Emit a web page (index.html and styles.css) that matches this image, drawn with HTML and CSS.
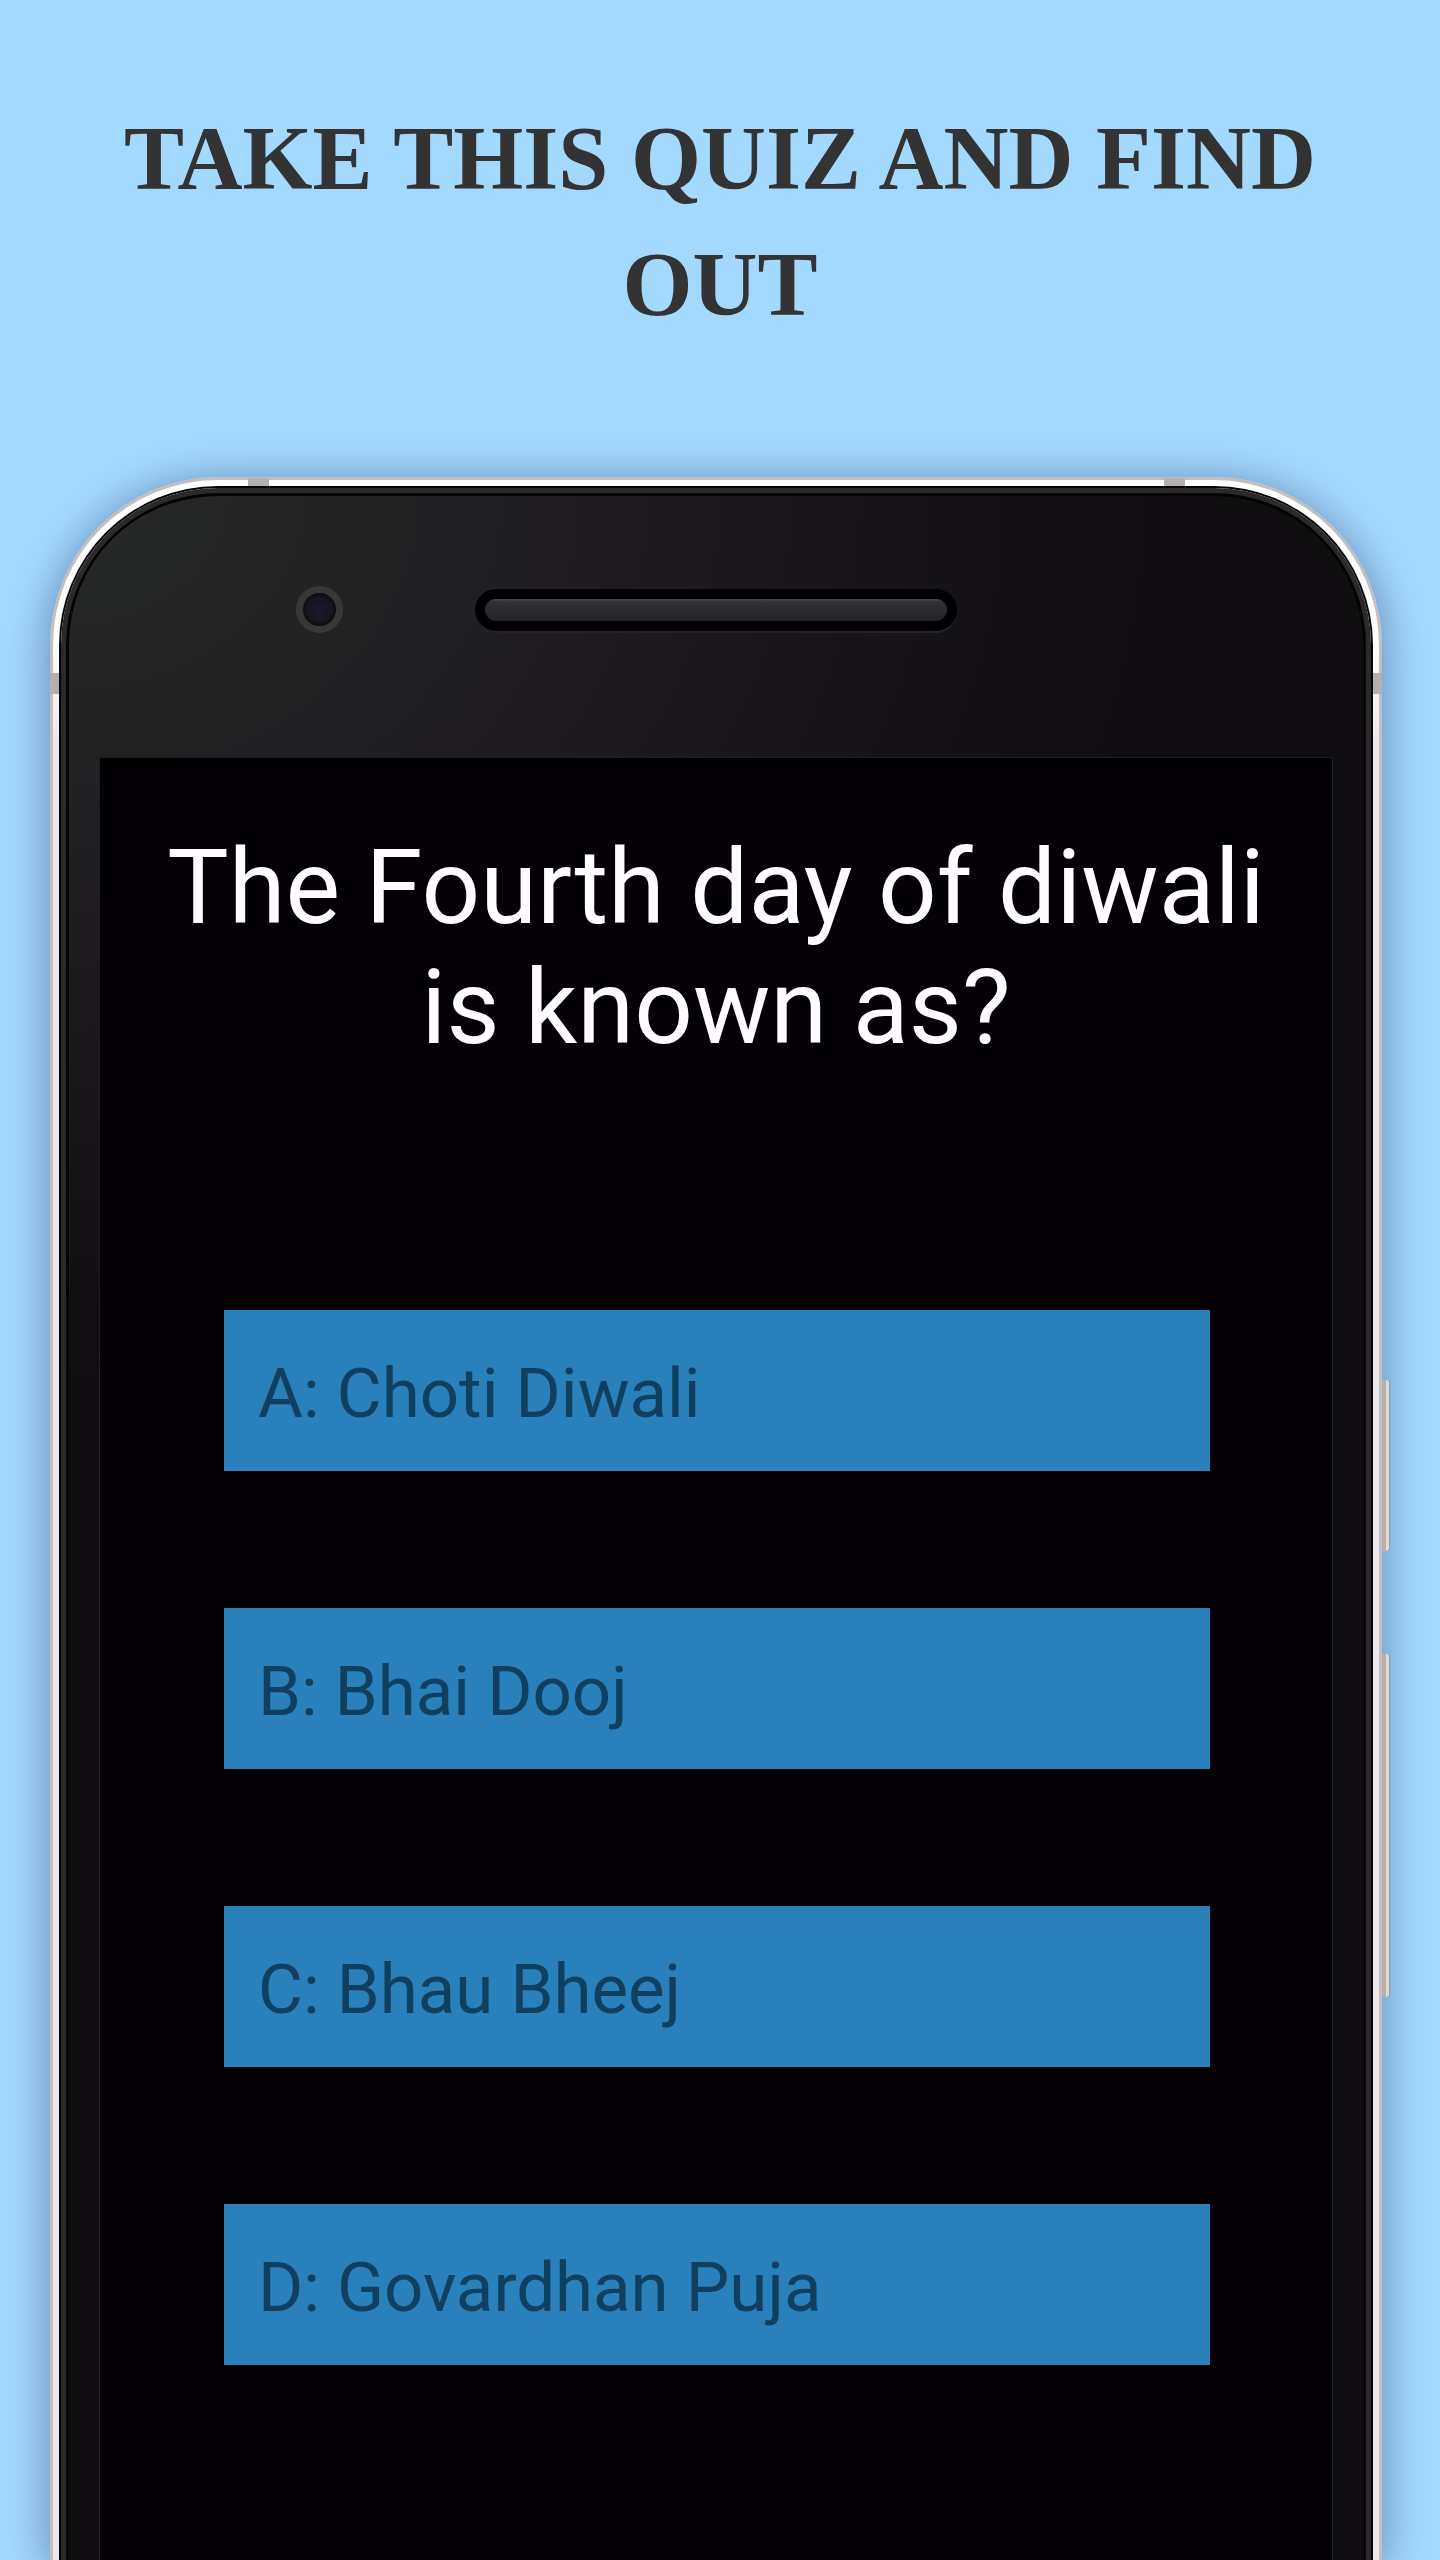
FILE: index.html
```html
<!DOCTYPE html>
<html lang="en">
<head>
<meta charset="utf-8">
<meta name="viewport" content="width=device-width, initial-scale=1">
<title>Diwali Quiz</title>
<link rel="stylesheet" href="styles.css">
</head>
<body>
<header class="promo">
  <h1 class="promo-title">TAKE THIS QUIZ AND FIND OUT</h1>
</header>
<main class="phone">
  <span class="band band-top-left"></span>
  <span class="band band-top-right"></span>
  <span class="band band-left"></span>
  <span class="band band-right"></span>
  <span class="key key-power"></span>
  <span class="key key-volume"></span>
  <div class="face">
    <div class="sensors">
      <span class="camera"></span>
      <span class="speaker"></span>
    </div>
    <section class="screen">
      <h2 class="question">The Fourth day of diwali is known as?</h2>
      <div class="answers">
        <button class="answer" type="button">A: Choti Diwali</button>
        <button class="answer" type="button">B: Bhai Dooj</button>
        <button class="answer" type="button">C: Bhau Bheej</button>
        <button class="answer" type="button">D: Govardhan Puja</button>
      </div>
    </section>
  </div>
</main>
</body>
</html>
```
FILE: styles.css
```css
* {
  box-sizing: border-box;
}

body {
  margin: 0;
  min-height: 100vh;
  display: flex;
  flex-direction: column;
  background: #a4d9ff;
  font-family: Roboto, "Liberation Sans", sans-serif;
}

.promo {
  padding: 96px 100px 129px;
}

.promo-title {
  margin: 0;
  font-family: "Liberation Serif", serif;
  font-size: 90px;
  line-height: 126px;
  font-weight: 700;
  text-align: center;
  color: #333333;
}

.phone {
  position: relative;
  flex: 1;
  display: flex;
  flex-direction: column;
  margin: 0 58px 0 50px;
  padding: 8px 8px 0;
  border: 3px solid #c3bfc0;
  border-bottom: 0;
  border-radius: 168px 168px 0 0;
  background: linear-gradient(#ffffff, #ffffff 160px, #ece7ec 260px);
  box-shadow: 0 6px 46px rgba(60, 85, 130, 0.65);
}

.face {
  flex: 1;
  display: flex;
  flex-direction: column;
  padding: 0 34px;
  border: 5px solid #2b292b;
  border-bottom: 0;
  border-radius: 157px 157px 0 0;
  background: radial-gradient(1100px 900px at 0 0, #272928, #1f1d20 45%, #0f0d0f);
  box-shadow: 0 0 0 2px #050505, inset 0 3px 0 #030303, inset 3px 0 0 #030303, inset -3px 0 0 #030303;
}

.sensors {
  display: grid;
  grid-template-columns: 1fr 482px 1fr;
  align-items: center;
  padding: 93px 0 125px;
}

.camera {
  justify-self: end;
  width: 47px;
  height: 47px;
  margin-right: 132px;
  border: 7px solid #373638;
  border-radius: 50%;
  background: radial-gradient(circle, #1c1830, #17151f 50%, #0b0a0d 75%);
}

.speaker {
  height: 42px;
  border: 10px solid #020003;
  border-radius: 21px;
  background: linear-gradient(#4a494b, #313032 3px, #232124);
  box-shadow: 0 2px 0 #252326;
}

.screen {
  flex: 1;
  padding: 70px 40px 197px;
  background: #020003;
  box-shadow: 0 0 0 1px #1d1c1e;
}

.question {
  margin: 0 0 242px;
  font-size: 103px;
  line-height: 120px;
  font-weight: 400;
  text-align: center;
  color: #fffcff;
}

.answers {
  display: flex;
  flex-direction: column;
  gap: 137px;
  padding: 0 82px 0 84px;
}

.answer {
  height: 161px;
  padding: 6px 34px 0;
  border: 0;
  background: #2a80bb;
  font-family: inherit;
  font-size: 69px;
  line-height: 80px;
  text-align: left;
  color: #103f60;
}

.band {
  position: absolute;
  background: #b4b0b1;
}

.band-top-left,
.band-top-right {
  top: -2px;
  width: 21px;
  height: 8px;
}

.band-top-left {
  left: 195px;
}

.band-top-right {
  right: 194px;
}

.band-left,
.band-right {
  top: 193px;
  width: 9px;
  height: 21px;
}

.band-left {
  left: -3px;
}

.band-right {
  right: -3px;
}

.key {
  position: absolute;
  right: -10px;
  width: 7px;
  border-right: 3px solid #dcdcd8;
  border-radius: 0 3px 3px 0;
  background: #b9b0ae;
  box-shadow: 1px 0 0 #9a9c98;
}

.key-power {
  top: 900px;
  height: 171px;
}

.key-volume {
  top: 1174px;
  height: 343px;
}
```
